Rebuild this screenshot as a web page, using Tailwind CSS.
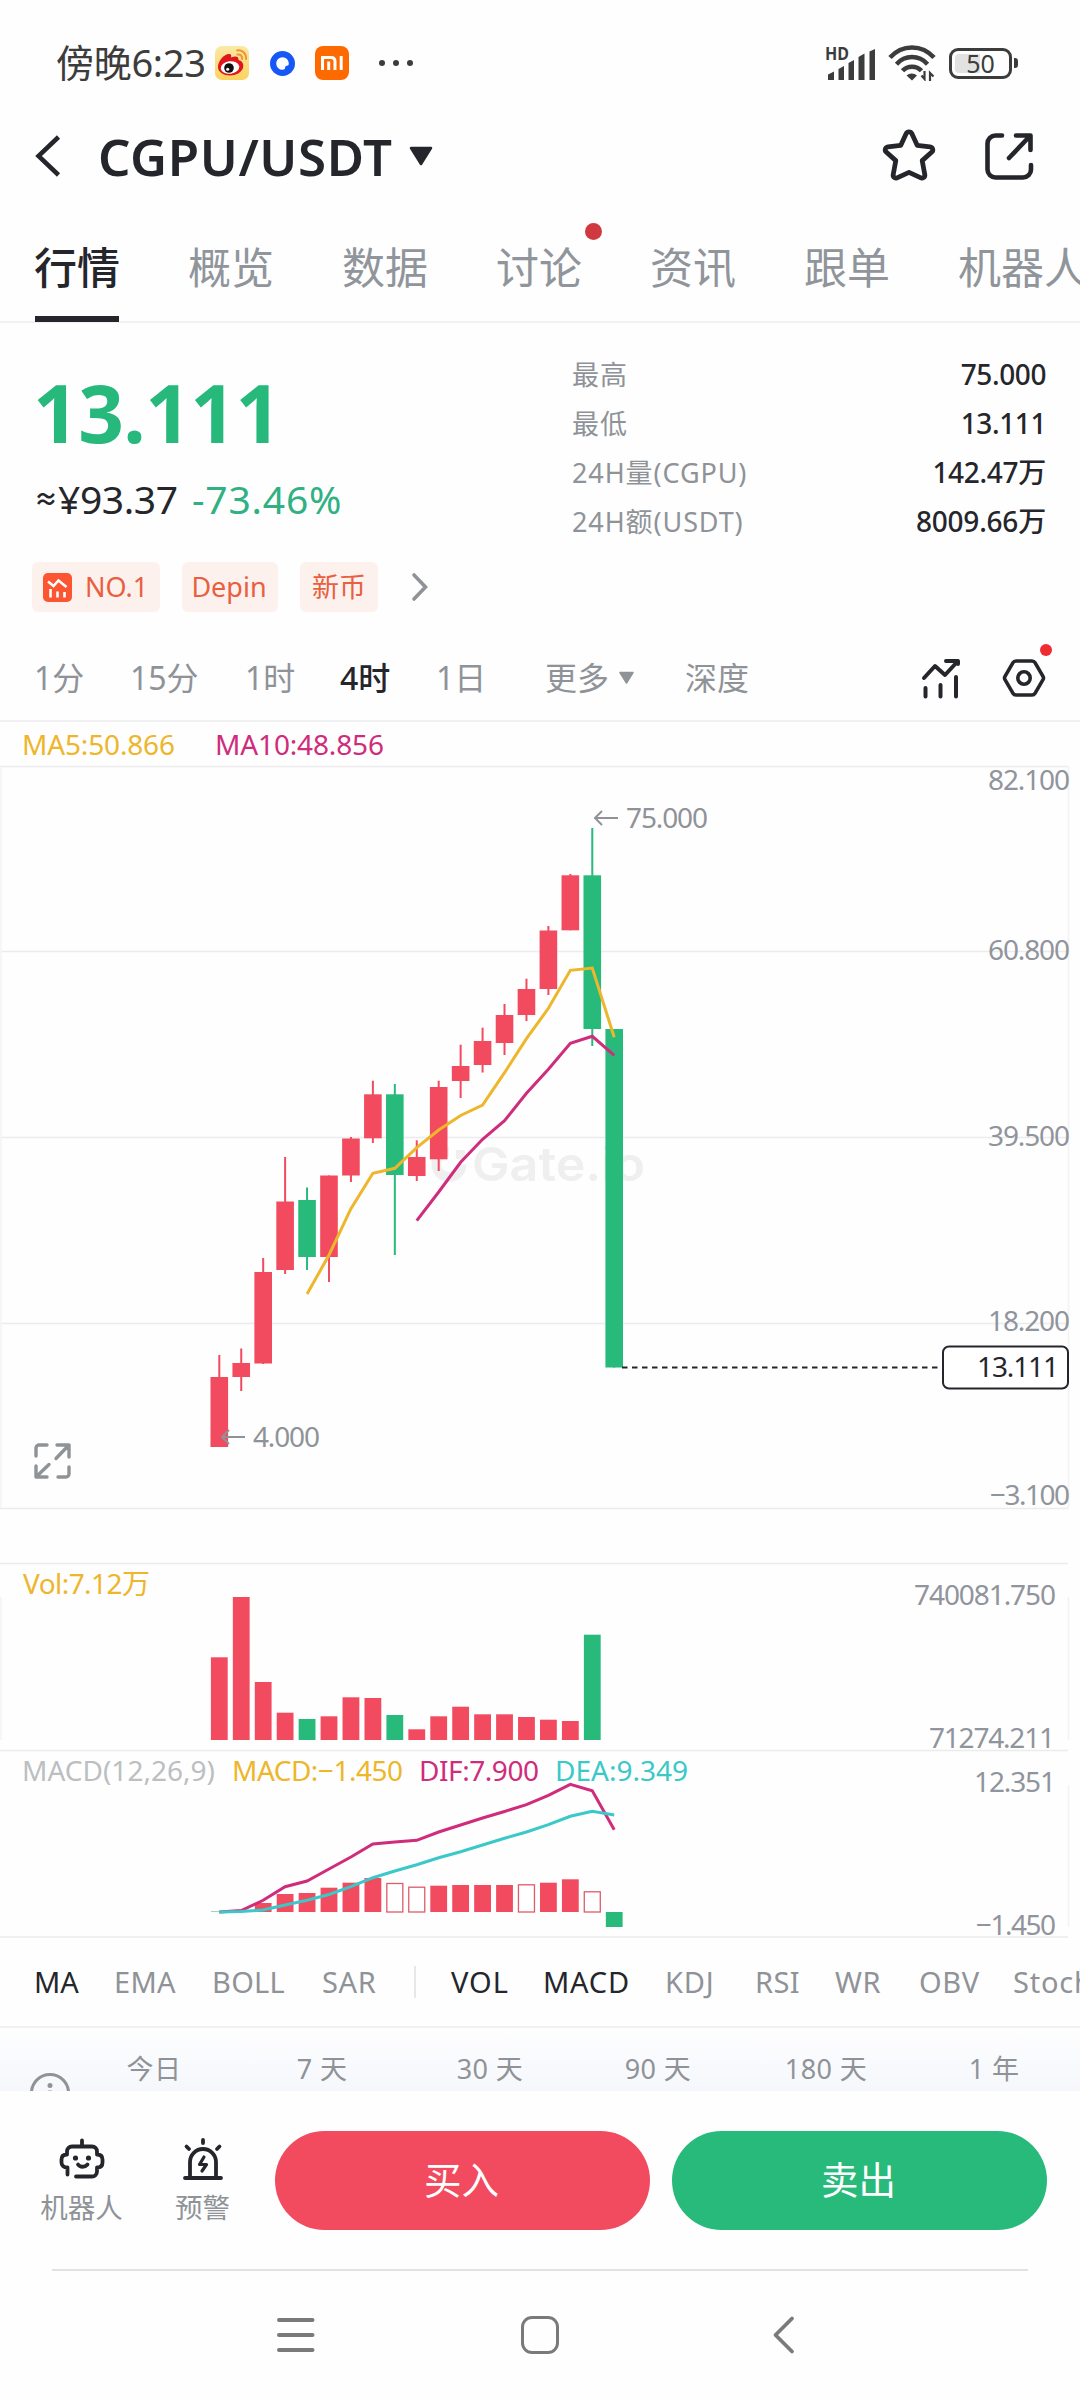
<!DOCTYPE html>
<html lang="zh-CN">
<head>
<meta charset="utf-8">
<meta name="viewport" content="width=1080">
<title>CGPU/USDT</title>
<script src="https://cdn.jsdelivr.net/npm/@tailwindcss/browser@4"></script>
</head>
<body class="bg-[#fefefe] font-['Noto_Sans','Noto_Sans_CJK_SC',sans-serif] text-[#24262b]">
<div class="flex h-[2400px] w-[1080px] flex-col overflow-hidden whitespace-nowrap">

  <!-- Status bar -->
  <div class="flex h-[104px] shrink-0 items-center justify-between pt-[22px] pr-[62px] pl-[56px] text-[#3c3c3c]">
    <div class="flex items-center">
      <span class="mb-[2px] w-[159px] text-[38px] leading-[40px] tracking-[-0.3px]">傍晚6:23</span>
      <svg class="size-[34px]" viewBox="0 0 34 34">
        <defs><linearGradient id="wb" x1="0" y1="0" x2="0" y2="1"><stop offset="0" stop-color="#fbe9a8"/><stop offset="1" stop-color="#fbd25c"/></linearGradient></defs>
        <rect width="34" height="34" rx="7" fill="url(#wb)"/>
        <path d="M3 21C3 15 9 8 14 8c2.500 0 2.500 2 2 3.500 4-1.600 8-1.500 7.500 2.500 4 1 5.500 4 4.500 8-1.500 4.500-7 7.500-13 7.500S3 26.500 3 21z" fill="#e1151c"/>
        <ellipse cx="15" cy="21.500" rx="9.300" ry="6.200" fill="#fff" transform="rotate(-8 15 21.500)"/>
        <circle cx="14" cy="22" r="4.800" fill="#111"/><circle cx="12.700" cy="23.200" r="1.500" fill="#fff"/>
        <path d="M22 4.500c5-1 9.500 3 9 8.500M22.500 8.500c3-.5 5 1.500 4.700 4.500" fill="none" stroke="#f0952f" stroke-width="2" stroke-linecap="round"/>
      </svg>
      <svg class="ml-[21px] size-[25px]" viewBox="0 0 25 25"><circle cx="12.500" cy="12.500" r="12.500" fill="#1657f5"/><path d="M12.500 6.200a6.300 6.300 0 0 1 6.300 6.300c0 1.300-.6 2.300-2 2.300-1 0-1.700.8-1.700 2 0 1.300-1 2-2.600 2a6.300 6.300 0 0 1 0-12.600z" fill="#fff"/></svg>
      <svg class="ml-[20px] size-[34px]" viewBox="0 0 34 34"><rect width="34" height="34" rx="8" fill="#ff6a00"/><path d="M7.500 24V11.500H16c2.500 0 4 1.300 4 4V24M13.700 15.500V24M26.200 10v14" fill="none" stroke="#fff" stroke-width="3"/></svg>
      <svg class="ml-[28px] h-[8px] w-[38px]" viewBox="0 0 38 8" fill="#3c3c3c"><circle cx="5" cy="4" r="3"/><circle cx="19" cy="4" r="3"/><circle cx="33" cy="4" r="3"/></svg>
    </div>
    <div class="flex items-center">
      <svg class="h-[36px] w-[52px] overflow-visible" viewBox="0 0 52 36" fill="#3c3c3c">
        <text x="0" y="15" font-size="17.500" font-weight="700" textLength="24" lengthAdjust="spacingAndGlyphs">HD</text>
        <path d="M3 29.500l6-3V35H3zM13.500 24l5.500-3v14h-5.500zM23.500 18l5.500-3v20h-5.500zM33.500 12l6-3.500V35h-6zM44.500 6.500L50 4v31h-5.500z"/>
      </svg>
      <svg class="ml-[11px] h-[36px] w-[48px]" viewBox="0 0 48 36">
        <path d="M2 12.500C14-1 34-1 46 12.500M8.500 19.200c8.500-9.500 22.500-9.500 31 0M14.500 25.800c5-5.500 14-5.500 19 0" fill="none" stroke="#3c3c3c" stroke-width="4.500"/>
        <path d="M18.500 30.500c3-2.800 7.500-2.800 10.500 0L24 35.500z" fill="#3c3c3c"/>
        <path d="M36.500 26v8l-3-3.500M42 36v-8l3.500 3.500" fill="none" stroke="#3c3c3c" stroke-width="2.200"/>
      </svg>
      <div class="relative ml-[13px] flex h-[31px] w-[63px] items-center justify-center rounded-[9px] border-[3px] border-[#3c3c3c]">
        <div class="absolute top-[3px] left-[3px] h-[19px] w-[25px] rounded-l-[4px] bg-[#e2e2e2]"></div>
        <span class="relative text-[25px] leading-[24px]">50</span>
      </div>
      <div class="ml-[2px] h-[10px] w-[4px] rounded-r-[3px] bg-[#3c3c3c]"></div>
    </div>
  </div>

  <!-- Title bar -->
  <header class="flex h-[104px] shrink-0 items-center pr-[46px] pl-[35px]">
    <svg class="h-[42px] w-[26px]" viewBox="0 0 26 42"><path d="M23.500 2L3.500 21l20 19" fill="none" stroke="#24262b" stroke-width="4.500"/></svg>
    <h1 class="ml-[37px] w-[294px] text-[51px] leading-[60px] font-semibold tracking-[0.6px]">CGPU/USDT</h1>
    <svg class="ml-[16px] h-[21px] w-[26px]" viewBox="0 0 26 21"><path d="M3 2h20L13 18z" fill="#24262b" stroke="#24262b" stroke-width="2.500" stroke-linejoin="round"/></svg>
    <svg class="ml-auto h-[54px] w-[54px]" viewBox="0 0 54 54"><path d="M24.200 5.500c1.100-2.300 4.500-2.300 5.600 0l5.400 11.800 12.900 1.500c2.600.3 3.600 3.500 1.700 5.200l-9.600 8.600 2.600 14c.5 2.500-2.200 4.300-4.400 3.100L27 44.300l-11.400 5.400c-2.200 1.200-4.900-.6-4.400-3.100l2.600-14L4.200 24c-1.900-1.700-.9-4.900 1.700-5.200l12.900-1.500z" transform="translate(0 -1)" fill="none" stroke="#24262b" stroke-width="4.800" stroke-linejoin="round"/></svg>
    <svg class="ml-[48px] size-[50px]" viewBox="0 0 50 50"><path d="M18 4.500h-6.500a8 8 0 0 0-8 8v26a8 8 0 0 0 8 8h27.500a8 8 0 0 0 8-8V34M32 4.500h14.500V19M46 5L25 27" fill="none" stroke="#24262b" stroke-width="4.600" stroke-linecap="round" stroke-linejoin="round"/></svg>
  </header>

  <!-- Tabs -->
  <nav class="flex h-[115px] shrink-0 gap-[68px] border-b-2 border-[#f1f1f3] pl-[34px] text-[43px] leading-[60px] text-[#90959b]">
    <div class="flex h-[114px] w-[86px] shrink-0 flex-col justify-between pt-[30px] font-medium text-[#24262b]"><span>行情</span><i class="ml-[1px] h-[6px] w-[84px] bg-[#24262b]"></i></div>
    <span class="shrink-0 pt-[30px]">概览</span>
    <span class="shrink-0 pt-[30px]">数据</span>
    <span class="relative shrink-0 pt-[30px]">讨论<i class="absolute top-[15px] -right-[20px] size-[17px] rounded-full bg-[#cf3a40]"></i></span>
    <span class="shrink-0 pt-[30px]">资讯</span>
    <span class="shrink-0 pt-[30px]">跟单</span>
    <span class="shrink-0 pt-[30px]">机器人</span>
  </nav>

  <!-- Price summary -->
  <section class="flex h-[313px] shrink-0 justify-between pr-[34px] pl-[32px]">
    <div class="flex flex-col">
      <div class="mt-[41px] h-[96px] pl-[1px] text-[80px] leading-[96px] font-bold tracking-[-0.6px] text-[#27b97c]">13.111</div>
      <div class="mt-[14px] flex h-[50px] items-center pl-[2px] text-[39px]"><span class="w-[24px] text-[24px] font-semibold">≈</span><span class="w-[134px] tracking-[-0.4px]">¥93.37</span><span class="text-[#30b183] tracking-[0.8px]">-73.46%</span></div>
      <div class="mt-[38px] flex h-[50px] items-center text-[27px] text-[#e8603f]">
        <span class="flex h-full w-[128px] items-center rounded-[6px] bg-[#fdf1ee] pl-[11px]">
          <svg class="size-[29px]" viewBox="0 0 29 29"><rect width="29" height="29" rx="5" fill="#fb5532"/><path d="M5 8.500l5.500 4.500 5-5.500 8 6.500M7.500 24.500V16M14.500 24.500V18.500M21.500 24.500V19" fill="none" stroke="#fff" stroke-width="2.600"/></svg>
          <span class="ml-[13px]">NO.1</span>
        </span>
        <span class="ml-[22px] flex h-full w-[96px] items-center justify-center rounded-[6px] bg-[#fdf1ee] pr-[2px]">Depin</span>
        <span class="ml-[22px] flex h-full w-[78px] items-center justify-center rounded-[6px] bg-[#fdf1ee]">新币</span>
        <svg class="ml-[33px] h-[30px] w-[18px]" viewBox="0 0 18 30"><path d="M3 3l11.500 12L3 27" fill="none" stroke="#8f9398" stroke-width="3.600" stroke-linecap="round"/></svg>
      </div>
    </div>
    <dl class="mt-[27px] grid h-[196px] w-[474px] grid-cols-[1fr_auto] grid-rows-4 items-center text-[28px] leading-[49px]">
      <dt class="text-[27px] tracking-[0.9px] text-[#8f9398]">最高</dt><dd class="text-right font-medium tracking-[-0.4px]">75.000</dd>
      <dt class="text-[27px] tracking-[0.9px] text-[#8f9398]">最低</dt><dd class="text-right font-medium tracking-[-0.4px]">13.111</dd>
      <dt class="text-[27px] tracking-[0.9px] text-[#8f9398]">24H量(CGPU)</dt><dd class="text-right font-medium tracking-[-0.3px]">142.47万</dd>
      <dt class="text-[27px] tracking-[0.9px] text-[#8f9398]">24H额(USDT)</dt><dd class="text-right font-medium tracking-[-0.2px]">8009.66万</dd>
    </dl>
  </section>

  <!-- Interval picker -->
  <section class="flex h-[86px] shrink-0 items-center border-b-2 border-[#f1f1f3] pl-[34px] text-[32px] leading-[40px] text-[#8f9398]">
    <span class="w-[96px]">1分</span>
    <span class="w-[115px]">15分</span>
    <span class="w-[95px]">1时</span>
    <span class="w-[96px] font-medium text-[#24262b]">4时</span>
    <span class="w-[109px]">1日</span>
    <span class="w-[73px]">更多</span>
    <svg class="h-[14px] w-[17px]" viewBox="0 0 17 14"><path d="M2 1.500h13L8.500 12z" fill="#8f9398" stroke="#8f9398" stroke-width="1.500" stroke-linejoin="round"/></svg>
    <span class="ml-[50px]">深度</span>
    <svg class="ml-[172px] h-[42px] w-[40px]" viewBox="0 0 40 42"><path d="M3 21L14 9l10 9L36.500 4.500M25 4h12v3M4.500 31v8.500M19.500 28v11.500M35 20v19.500" fill="none" stroke="#24262b" stroke-width="4" stroke-linecap="round" stroke-linejoin="round"/></svg>
    <div class="relative ml-[41px]">
      <svg class="h-[42px] w-[44px]" viewBox="0 0 44 42"><path d="M14 4h16q2 0 3 1.700l8 13.600q1 1.700 0 3.400l-8 13.600q-1 1.700-3 1.700H14q-2 0-3-1.700L3 22.700q-1-1.700 0-3.400L11 5.700Q12 4 14 4z" fill="none" stroke="#24262b" stroke-width="3.600"/><circle cx="22" cy="21" r="6.200" fill="none" stroke="#24262b" stroke-width="3.600"/></svg>
      <i class="absolute -top-[13px] right-[-6px] size-[12px] rounded-full bg-[#f02c33]"></i>
    </div>
  </section>

  <!-- Charts -->
  <svg id="chart" class="h-[1216px] w-[1080px] shrink-0" viewBox="0 722 1080 1216" font-size="28">
    <g stroke="#ececee" stroke-width="1.500" fill="none">
      <path d="M0 766.500H1068.500M0 1508.500H1068.500M1 951.500H1068M1 1137.500H1068M1 1323.500H1068"/>
      <path d="M0 1563.500H1068M0 1750.500H1068M0 1937H1068"/>
      <path stroke="#f3f3f5" d="M1 766V1508M1068.500 766V1508M1 1597V1740M1068.500 1597V1740M1068.500 1785V1927"/>
    </g>
    <g fill="#efeff0">
      <path d="M449 1147a17.500 17.500 0 1 0 17.500 17.500H456a7.500 7.500 0 1 1-7-7.500z"/><path d="M456 1150h9v9h-9z"/>
      <text x="472" y="1181" font-family="Inter" font-size="47" font-weight="600" textLength="173" lengthAdjust="spacingAndGlyphs">Gate.io</text>
    </g>
    <g id="bars"></g>
    <g id="lines" fill="none" stroke-width="3"></g>
    <path d="M622 1367.500H938" stroke="#24262b" stroke-width="2" stroke-dasharray="5.500 4.500"/>
    <rect x="943" y="1346.500" width="125" height="42" rx="6" fill="#fff" stroke="#24262b" stroke-width="2"/>
    <g stroke="#8f9398" stroke-width="2" fill="none"><path d="M618 818H595M602 811l-7 7 7 7"/><path d="M245 1437H222M229 1430l-7 7 7 7"/></g>
    <g fill="#8f9398">
      <text x="626" y="828" textLength="82">75.000</text>
      <text x="253" y="1447" textLength="67">4.000</text>
    </g>
    <g fill="#90949c">
      <text x="988" y="790" textLength="82">82.100</text>
      <text x="988" y="960" textLength="82">60.800</text>
      <text x="988" y="1146" textLength="82">39.500</text>
      <text x="988" y="1331" textLength="82">18.200</text>
      <text x="990" y="1505" textLength="80">−3.100</text>
      <text x="914" y="1605" textLength="142">740081.750</text>
      <text x="929" y="1748" textLength="126">71274.211</text>
      <text x="974" y="1792" textLength="82">12.351</text>
      <text x="976" y="1935" textLength="80">−1.450</text>
    </g>
    <text x="977" y="1377" textLength="82" fill="#24262b">13.111</text>
    <text x="22" y="755" textLength="153" fill="#edb62b">MA5:50.866</text>
    <text x="215" y="755" textLength="169" fill="#cf2c7c">MA10:48.856</text>
    <text x="23" y="1594" textLength="127" fill="#edb62b">Vol:7.12万</text>
    <text x="22" y="1781" textLength="193" fill="#bcbec1">MACD(12,26,9)</text>
    <text x="232" y="1781" textLength="171" fill="#edb62b">MACD:−1.450</text>
    <text x="419" y="1781" textLength="120" fill="#cf2c7c">DIF:7.900</text>
    <text x="555" y="1781" textLength="133" fill="#3bc8c9">DEA:9.349</text>
    <path d="M47 1445h-8a3 3 0 0 0-3 3v8M57 1445h12v12M68 1446l-12 12.500M36 1466v11h11M37 1476l12-11.500M69 1467v7a3 3 0 0 1-3 3h-8" fill="none" stroke="#8f9398" stroke-width="3.400" stroke-linecap="round" stroke-linejoin="round"/>
  </svg>

  <!-- Indicator picker -->
  <section class="flex h-[90px] shrink-0 items-center border-b-2 border-[#f1f1f3] pl-[34px] text-[29px] text-[#8f9398]">
    <span class="w-[80px] shrink-0 text-[#24262b]">MA</span>
    <span class="w-[98px] shrink-0 tracking-[0.3px]">EMA</span>
    <span class="w-[110px] shrink-0 tracking-[0.3px]">BOLL</span>
    <span class="w-[92px] shrink-0 tracking-[0.6px]">SAR</span>
    <i class="h-[32px] w-[2px] shrink-0 bg-[#e8e8ea]"></i>
    <span class="ml-[35px] w-[92px] shrink-0 tracking-[1px] text-[#24262b]">VOL</span>
    <span class="w-[122px] shrink-0 tracking-[0.8px] text-[#24262b]">MACD</span>
    <span class="w-[90px] shrink-0 tracking-[0.8px]">KDJ</span>
    <span class="w-[80px] shrink-0 tracking-[0.4px]">RSI</span>
    <span class="w-[84px] shrink-0 tracking-[0.6px]">WR</span>
    <span class="w-[94px] shrink-0 tracking-[0.6px]">OBV</span>
    <span class="shrink-0 tracking-[0.8px]">Stoch</span>
  </section>

  <!-- Performance header -->
  <section class="relative flex h-[63px] shrink-0 overflow-hidden bg-linear-to-b from-[#fefefe] to-[#f5f7fc] pl-[70px] text-[27px] text-[#8f9398]">
    <svg class="absolute top-[44px] left-[29px] size-[42px]" viewBox="0 0 42 42"><circle cx="21" cy="21" r="18.500" fill="none" stroke="#8f9398" stroke-width="3"/><circle cx="21" cy="13.500" r="2.500" fill="#8f9398"/><path d="M21 18.500v12" stroke="#8f9398" stroke-width="3.500"/></svg>
    <div class="grid h-[82px] w-[1008px] grid-cols-6 items-center text-center tracking-[0.4px]">
      <span>今日</span><span>7 天</span><span>30 天</span><span>90 天</span><span>180 天</span><span>1 年</span>
    </div>
  </section>

  <!-- Action bar -->
  <section class="flex h-[178px] shrink-0 items-center pl-[40px] text-[27.5px] leading-[32px] text-[#8f9398]">
    <div class="flex w-[83px] flex-col items-center">
      <svg class="h-[44px] w-[48px]" viewBox="0 0 48 44"><path d="M24 3.500v5M9.500 37.500v-7c-4 0-6-2-6-5v-3c0-3 2-5 5.500-5v-3a5 5 0 0 1 5-5h20a5 5 0 0 1 5 5v3c3.500 0 5.500 2 5.500 5v3c0 3-2 5-5.500 5v4a5 5 0 0 1-5 5H18M20 27.500c2 3 7 3 9.500 0" fill="none" stroke="#24262b" stroke-width="3.800" stroke-linecap="round" stroke-linejoin="round"/><circle cx="17.500" cy="21" r="2.600" fill="#24262b"/><circle cx="30.500" cy="21" r="2.600" fill="#24262b"/></svg>
      <span class="mt-[11px]">机器人</span>
    </div>
    <div class="ml-[52px] flex w-[55px] flex-col items-center">
      <svg class="h-[44px] w-[44px]" viewBox="0 0 44 44"><path d="M4 41h36M9 41V25a13 13 0 0 1 26 0v16M22 3v3M5.500 9.500L8 12M38.500 9.500L36 12" fill="none" stroke="#24262b" stroke-width="3.800" stroke-linecap="round" stroke-linejoin="round"/><path d="M23 20l-4.500 7.500h7L21 34" fill="none" stroke="#24262b" stroke-width="3.200" stroke-linecap="round" stroke-linejoin="round"/></svg>
      <span class="mt-[11px]">预警</span>
    </div>
    <button class="ml-[45px] h-[99px] w-[375px] rounded-full bg-[#f24a5e] pr-[2px] text-[37.5px] text-white">买入</button>
    <button class="ml-[22px] h-[99px] w-[375px] rounded-full bg-[#27ba7b] pr-[2px] text-[37.5px] text-white">卖出</button>
  </section>
  <hr class="mx-[52px] border-t-2 border-[#e2e2e2]">

  <!-- System navigation -->
  <footer class="flex h-[128px] shrink-0 items-center pl-[275px]">
    <svg class="h-[42px] w-[42px]" viewBox="0 0 42 42"><path d="M4 6h33.500M4 21h33.500M4 36h33.500" stroke="#7a7a7a" stroke-width="4" stroke-linecap="round"/></svg>
    <div class="ml-[204px] size-[38px] rounded-[11px] border-[3.500px] border-[#7a7a7a]"></div>
    <svg class="ml-[213px] h-[42px] w-[24px]" viewBox="0 0 24 42"><path d="M20 4.500L3.500 21 20 37.500" fill="none" stroke="#7a7a7a" stroke-width="3.800" stroke-linecap="round" stroke-linejoin="round"/></svg>
  </footer>
</div>

<script>
  const RED = '#f24a5e', GREEN = '#27ba7b', X0 = 219.3, STEP = 21.94, NS = 'http://www.w3.org/2000/svg';
  const cx = i => X0 + i * STEP;
  function add(parent, tag, attrs) {
    const el = document.createElementNS(NS, tag);
    for (const k in attrs) el.setAttribute(k, attrs[k]);
    document.getElementById(parent).appendChild(el);
  }
  // [wick top, body top, body bottom, wick bottom, falling]
  const candles = [
    [1355,1377,1447,1447],[1348.5,1363,1377,1391],[1258,1272,1363.5,1364],[1157,1201.5,1270,1274],
    [1187.5,1200,1257,1270,1],[1175.5,1175.5,1257,1282],[1137,1138.5,1175.5,1182],[1080.7,1094.3,1138.3,1143],
    [1084,1094.3,1175,1255,1],[1140.3,1157,1176,1181],[1080.7,1087,1159.3,1171],[1044.7,1066,1081,1098],
    [1027.7,1041,1065,1072.5],[1004,1015,1043,1055],[978.7,989,1015,1021],[926,930.5,989,995],
    [874,875.3,930.3,930.3],[828,875.3,1029,1046,1],[1029,1029,1367.5,1367.5,1]
  ];
  candles.forEach(([h, t, b, l, down], i) => {
    const c = down ? GREEN : RED;
    add('bars', 'rect', { x: cx(i) - 1, y: h, width: 2, height: l - h, fill: c });
    add('bars', 'rect', { x: cx(i) - 8.8, y: t, width: 17.6, height: b - t, fill: c });
  });
  const vol = [1657.3,1597,1682,1712.7,1719,1716.3,1697.3,1698,1715,1729.3,1716.3,1706.7,1714.3,1714.3,1717,1719.7,1721,1634.7];
  vol.forEach((t, i) => add('bars', 'rect', { x: cx(i) - 8.4, y: t, width: 16.8, height: 1740 - t, fill: [4, 8, 17].includes(i) ? GREEN : RED }));
  const macd = [1911.5,1911,1903,1894,1893,1887.7,1882.7,1878,1883,1886.7,1885.7,1885,1885,1885,1884.3,1882.7,1879.3,1891.3];
  macd.forEach((t, i) => {
    if ([8, 9, 14, 17].includes(i)) add('bars', 'rect', { x: cx(i) - 8, y: t + .5, width: 16, height: 1911.5 - t, fill: '#fff', stroke: '#dd5c6b', 'stroke-width': 1.3 });
    else add('bars', 'rect', { x: cx(i) - 8.4, y: t, width: 16.8, height: 1912 - t, fill: i < 2 ? GREEN : RED });
  });
  add('bars', 'rect', { x: cx(18) - 8.4, y: 1912, width: 16.8, height: 15, fill: GREEN });
  const line = (start, ys, stroke) => add('lines', 'polyline', { points: ys.map((y, i) => cx(i + start) + ',' + y).join(' '), stroke });
  line(4, [1294,1255,1208.7,1173.3,1168.3,1147.7,1130,1115.5,1105,1072.7,1038.7,1008.3,970.3,968,1037.3], '#edb62b');
  line(9, [1220.7,1192,1162.3,1139.3,1120.7,1093.3,1069.3,1043.3,1036.3,1055.3], '#cf2c7c');
  line(0, [1912,1910.5,1900.3,1886.7,1881,1869,1857,1844,1842,1840.3,1832,1825,1818,1811.5,1804.7,1795.3,1784.3,1790.7,1829.7], '#cf2c7c');
  line(0, [1912,1911.5,1910,1905,1900.3,1894.5,1886.7,1877.7,1871,1864.7,1857.7,1851.7,1845,1838.3,1832,1824.7,1816.3,1811.3,1815], '#3bc8c9');
</script>
</body>
</html>
